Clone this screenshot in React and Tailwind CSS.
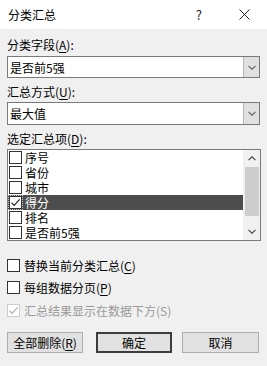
import React from "react";

/* ================= SMALL PARTS ================= */

const Chevron = ({ up = false, color = "#606060" }) => (
<svg width="8" height="5" viewBox="0 0 8 5" className={up ? "rotate-180" : ""}>
<path d="M0.5 0.8 L4 4.2 L7.5 0.8" fill="none" stroke={color} strokeWidth="1.1"/>
</svg>
);

const Check = ({ color = "#222" }) => (
<svg width="11" height="11" viewBox="0 0 11 11">
<path d="M1.5 5.8 L4.2 8.4 L9.6 2.4" fill="none" stroke={color} strokeWidth="1.2"/>
</svg>
);

const Box = ({ checked = false, disabled = false, focus = false }) => (
<div className={`relative flex items-center justify-center w-[13px] h-[13px] shrink-0 bg-white border ${disabled ? "border-[#cccccc]" : "border-[#333333]"}`}>
{checked && <Check color={disabled ? "#b0b0b0" : "#222"}/>}
{focus && <div className="absolute -inset-[2px] border border-dotted border-[#c8c8c8]"/>}
</div>
);

const Combo = ({ value, h }) => (
<div className={`flex items-stretch w-[253px] ${h} bg-white border border-[#7a7a7a]`}>
<div className="flex items-center flex-1 pl-[2px]">{value}</div>
<div className="flex items-center justify-center w-[16px] bg-[#e0e0e0] border-l border-[#b5b5b5]">
<Chevron/>
</div>
</div>
);

const U = ({ children }) => <span className="underline underline-offset-2">{children}</span>;

/* ================= DATA ================= */

const items = [
{ name: "序号" },
{ name: "省份" },
{ name: "城市" },
{ name: "得分", checked: true, selected: true },
{ name: "排名" },
{ name: "是否前5强" },
];

export default function App() {

return (

<div className="w-[267px] h-[366px] bg-[#f0f0f0] text-[12px] leading-[15px] text-black overflow-hidden" style={{ fontFamily: '"Noto Sans CJK SC", "Noto Sans", sans-serif' }}>

{/* TITLE BAR */}

<div className="flex items-center h-[29px] bg-white pl-[8px]">
<span className="text-[12px]">分类汇总</span>
<span className="ml-auto mr-[37px] text-[13px] text-[#222]">?</span>
<svg width="11" height="11" viewBox="0 0 11 11" className="mr-[17px]">
<path d="M0.5 0.5 L10.5 10.5 M10.5 0.5 L0.5 10.5" stroke="#222" strokeWidth="1"/>
</svg>
</div>

{/* BODY */}

<div className="flex flex-col px-[7px] pt-[8px]">

<div>分类字段(<U>A</U>):</div>
<div className="mt-[4px]">
<Combo value="是否前5强" h="h-[22px]"/>
</div>

<div className="mt-[6px]">汇总方式(<U>U</U>):</div>
<div className="mt-[3px]">
<Combo value="最大值" h="h-[23px]"/>
</div>

<div className="mt-[6px]">选定汇总项(<U>D</U>):</div>

{/* LIST */}

<div className="flex mt-[3px] w-[254px] h-[92px] bg-white border border-[#7a7a7a]">

<div className="flex flex-col flex-1">
{items.map((it) => (
<div key={it.name} className={`flex items-center h-[15px] pl-[1px] gap-[3px] ${it.selected ? "bg-[#4d4d4d] text-white" : ""}`}>
<Box checked={it.checked} focus={it.selected}/>
<span className="leading-[13px]">{it.name}</span>
</div>
))}
</div>

<div className="flex flex-col items-center w-[17px] bg-[#f0f0f0]">
<div className="flex items-center justify-center h-[17px]">
<Chevron up color="#444"/>
</div>
<div className="w-[14px] h-[49px] bg-[#cdcdcd]"/>
<div className="flex items-center justify-center mt-auto h-[17px]">
<Chevron color="#444"/>
</div>
</div>

</div>

{/* OPTIONS */}

<div className="flex items-center gap-[4px] mt-[17px] h-[15px]">
<Box/>
<span>替换当前分类汇总(<U>C</U>)</span>
</div>

<div className="flex items-center gap-[4px] mt-[7px] h-[15px]">
<Box/>
<span>每组数据分页(<U>P</U>)</span>
</div>

<div className="flex items-center gap-[4px] mt-[8px] h-[15px] text-[#9a9a9a]">
<Box checked disabled/>
<span>汇总结果显示在数据下方(S)</span>
</div>

{/* BUTTONS */}

<div className="flex mt-[14px]">

<button className="flex items-center justify-center w-[76px] h-[21px] bg-[#e1e1e1] border border-[#adadad]">
全部删除(<U>R</U>)
</button>

<button className="flex items-center justify-center w-[76px] h-[21px] ml-[13px] bg-[#e1e1e1] border-2 border-[#3c3c3c]">
确定
</button>

<button className="flex items-center justify-center w-[77px] h-[21px] ml-[10px] bg-[#e1e1e1] border border-[#adadad]">
取消
</button>

</div>

</div>

</div>

);

}
